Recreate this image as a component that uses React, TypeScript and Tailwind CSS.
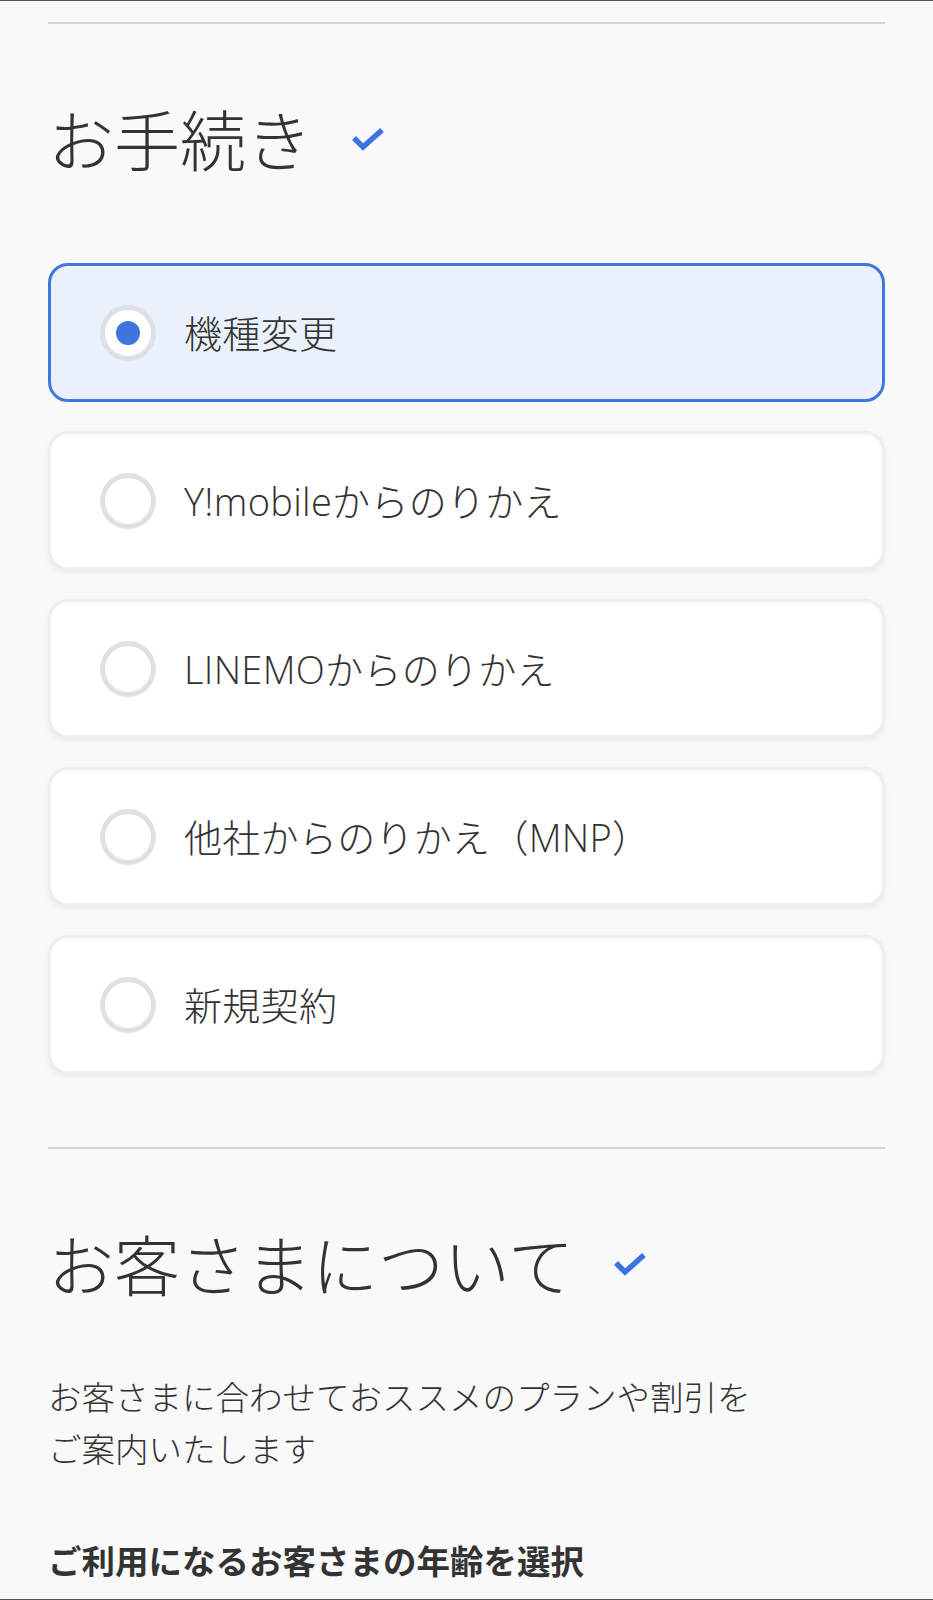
import { useState } from 'react'

const font = { fontFamily: '"Open Sans", "Noto Sans CJK JP", sans-serif' }

const options = [
  '機種変更',
  'Y!mobileからのりかえ',
  'LINEMOからのりかえ',
  '他社からのりかえ（MNP）',
  '新規契約',
]

function Check() {
  return (
    <svg width="36" height="26" viewBox="0 0 36 26" className="ml-[38px] shrink-0">
      <polyline points="4,11 13,20 32,3" fill="none" stroke="#3b74e2" strokeWidth="5.5" />
    </svg>
  )
}

function Heading({ children }: { children: string }) {
  return (
    <div className="flex items-center h-[80px]">
      <h2 className="text-[66px] leading-none font-light text-[#333333]">{children}</h2>
      <Check />
    </div>
  )
}

function Option({ label, selected, onSelect }: { label: string; selected: boolean; onSelect: () => void }) {
  return (
    <button
      type="button"
      onClick={onSelect}
      className={
        selected
          ? 'flex items-center h-[139px] w-full rounded-[20px] border-[3px] border-[#3d78dc] bg-[#eaf1fd] pl-[49px] text-left'
          : 'flex items-center h-[139px] w-full rounded-[20px] border-[3px] border-[#eeeeee] bg-white pl-[49px] text-left shadow-[0_3px_6px_rgba(0,0,0,0.06)]'
      }
    >
      <span className="flex items-center justify-center w-[56px] h-[56px] rounded-full border-[5px] border-[#dde1e6] bg-white shrink-0">
        {selected && <span className="w-[24px] h-[24px] rounded-full bg-[#3f74dd]" />}
      </span>
      <span className="ml-[28px] text-[38px] leading-none font-light tracking-[0.3px] text-[#333333]">{label}</span>
    </button>
  )
}

export default function App() {
  const [selected, setSelected] = useState(0)

  return (
    <div style={font} className="w-[933px] h-[1600px] overflow-hidden bg-[#f9f9f9] border-y border-[#555555] px-[48px]">
      <div className="mt-[21px] h-[2px] bg-[#d4d4d4]" />

      <div className="mt-[76px]">
        <Heading>お手続き</Heading>
      </div>

      <div className="mt-[83px] flex flex-col gap-[29px]">
        {options.map((o, i) => (
          <Option key={o} label={o} selected={selected === i} onSelect={() => setSelected(i)} />
        ))}
      </div>

      <div className="mt-[73px] h-[2px] bg-[#d4d4d4]" />

      <div className="mt-[76px]">
        <Heading>お客さまについて</Heading>
      </div>

      <p className="mt-[66px] text-[33.5px] leading-[52px] font-light text-[#333333]">
        お客さまに合わせておススメのプランや割引を
        <br />
        ご案内いたします
      </p>

      <p className="mt-[60px] text-[33.5px] leading-[52px] font-bold text-[#333333]">
        ご利用になるお客さまの年齢を選択
      </p>
    </div>
  )
}
